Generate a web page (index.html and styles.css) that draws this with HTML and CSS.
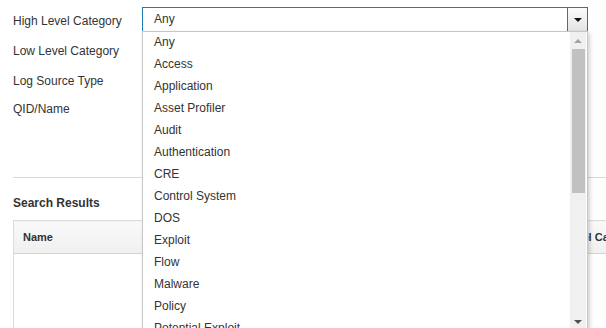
FILE: index.html
```html
<!DOCTYPE html>
<html>
<head>
  <title>QID Search</title>
  <link rel="stylesheet" href="styles.css">
</head>
<body>

<div class="page">

  <div class="filters">
    <div class="field">
      <span class="label">High Level Category</span>
      <div class="combo">
        <div class="combo-box open">
          <span class="combo-value">Any</span>
          <span class="combo-arrow"><span class="tri-down"></span></span>
        </div>
        <div class="dropdown">
          <ul class="options">
            <li>Any</li>
            <li>Access</li>
            <li>Application</li>
            <li>Asset Profiler</li>
            <li>Audit</li>
            <li>Authentication</li>
            <li>CRE</li>
            <li>Control System</li>
            <li>DOS</li>
            <li>Exploit</li>
            <li>Flow</li>
            <li>Malware</li>
            <li>Policy</li>
            <li>Potential Exploit</li>
          </ul>
          <div class="scrollbar">
            <span class="sb-btn"><span class="tri-up"></span></span>
            <span class="sb-track"><span class="sb-thumb"></span></span>
            <span class="sb-btn"><span class="tri-down small"></span></span>
          </div>
        </div>
      </div>
    </div>
    <div class="field">
      <span class="label">Low Level Category</span>
      <div class="combo-box"><span class="combo-value">Any</span></div>
    </div>
    <div class="field short">
      <span class="label">Log Source Type</span>
      <div class="combo-box"><span class="combo-value">Any</span></div>
    </div>
    <div class="field">
      <span class="label">QID/Name</span>
      <input type="text" class="text-input">
    </div>
  </div>

  <hr class="divider">

  <h2 class="section-title">Search Results</h2>

  <table class="results">
    <thead>
      <tr>
        <th class="col-name">Name</th>
        <th>Low Level Category</th>
      </tr>
    </thead>
    <tbody>
      <tr><td></td><td></td></tr>
    </tbody>
  </table>

</div>

</body>
</html>
```

FILE: styles.css
```css
* {
  box-sizing: border-box;
}

body {
  margin: 0;
  overflow: hidden;
  font-family: "Liberation Sans", Arial, sans-serif;
  font-size: 12px;
  color: #333;
  background: #fff;
}

.page {
  width: 680px;
  padding: 7px 0 0 13px;
}

/* filter form */
.filters {
  display: flex;
  flex-direction: column;
  height: 170px;
}

.field {
  display: flex;
  align-items: flex-start;
  height: 30px;
}

.field.short {
  height: 28px;
}

.label {
  width: 129px;
  margin-top: 7px;
  line-height: 14px;
}

.combo {
  position: relative;
}

.combo-box {
  display: flex;
  width: 446px;
  height: 24px;
  border: 1px solid #c8c8c8;
  background: #fff;
}

.combo-box.open {
  border-color: #1c7db6;
  border-bottom: none;
}

.combo-value {
  flex: 1;
  padding-left: 11px;
  line-height: 23px;
}

.combo-arrow {
  display: flex;
  align-items: center;
  justify-content: center;
  width: 20px;
  border-left: 1px solid #1c7db6;
  background: linear-gradient(#fbfbfb, #e4e4e4);
}

.tri-down {
  width: 0;
  height: 0;
  border-left: 4px solid transparent;
  border-right: 4px solid transparent;
  border-top: 4px solid #111;
}

.tri-down.small {
  border-top-color: #505050;
}

.tri-up {
  width: 0;
  height: 0;
  border-left: 4px solid transparent;
  border-right: 4px solid transparent;
  border-bottom: 4px solid #a3a3a3;
}

/* open list, drawn over the form */
.dropdown {
  position: absolute;
  top: 24px;
  left: 0;
  width: 446px;
  height: 300px;
  display: flex;
  border: 1px solid #c6c6c6;
  background: #fff;
  box-shadow: 2px 2px 4px rgba(0, 0, 0, 0.18);
  z-index: 5;
}

.options {
  flex: 1;
  margin: -1px 0 0;
  padding: 0;
  list-style: none;
  overflow: hidden;
}

.options li {
  height: 22px;
  line-height: 22px;
  padding-left: 11px;
  white-space: nowrap;
}

.scrollbar {
  display: flex;
  flex-direction: column;
  width: 16px;
  margin-right: 1px;
  background: #f0f0f0;
}

.sb-btn {
  display: flex;
  align-items: center;
  justify-content: center;
  height: 17px;
}

.sb-track {
  flex: 1;
  padding: 0 1px 0 2px;
}

.sb-thumb {
  display: block;
  height: 144px;
  background: #c1c1c1;
}

/* results */
.divider {
  margin: 0;
  border: none;
  border-top: 1px solid #d9d9d9;
}

.section-title {
  margin: 18px 0 0;
  font-size: 12px;
  line-height: 14px;
  font-weight: bold;
}

.results {
  margin-top: 10px;
  width: 660px;
  border-collapse: collapse;
  border: 1px solid #dcdcdc;
}

.results th {
  height: 33px;
  padding: 0 9px;
  text-align: left;
  font-size: 11px;
  font-weight: bold;
  background: linear-gradient(#f9f9f9, #f0f0f0);
  border-bottom: 1px solid #d4d4d4;
}

.results .col-name {
  width: 516px;
}

.results td {
  height: 100px;
}

.text-input {
  width: 446px;
  height: 22px;
  border: 1px solid #c8c8c8;
}
```
